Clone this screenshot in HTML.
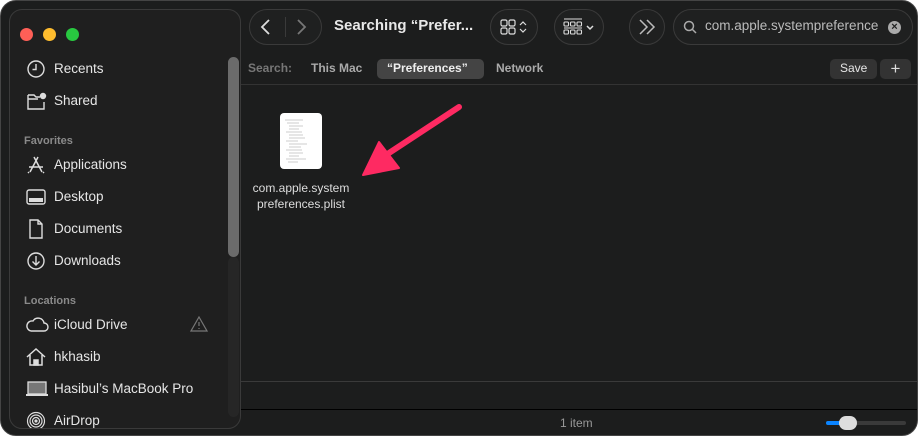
<!DOCTYPE html>
<html><head><style>
*{margin:0;padding:0;box-sizing:border-box}
body{width:920px;height:436px;background:#fff;font-family:"Liberation Sans",sans-serif;overflow:hidden;position:relative}
.win{position:absolute;left:0;top:0;width:918px;height:436px;background:#1c1d1d;border-radius:16px;border:1px solid #444;overflow:hidden}
.side{position:absolute;left:8px;top:8px;width:232px;height:420px;background:#1f1f1f;border:1px solid #3a3a3a;border-radius:13px;overflow:hidden}
.dot{position:absolute;top:18px;width:13px;height:13px;border-radius:50%}
.it{position:absolute;left:44px;color:#e6e6e6;font-size:13.5px}
.hd{position:absolute;left:14px;color:#8a8a8a;font-size:11px;font-weight:bold}
.ic{position:absolute;left:16px}
.t{position:absolute;color:#ddd}
.pill{position:absolute;border:1px solid #3a3a3a;border-radius:18px;background:#1f2020}
</style></head><body>
<div class="win">
<div class="side">
 <div class="dot" style="left:10px;background:#fe5f57"></div>
 <div class="dot" style="left:33px;background:#febc2e"></div>
 <div class="dot" style="left:56px;background:#28c840"></div>
 <div style="position:absolute;left:218px;top:47px;width:11px;height:200px;background:#6b6b6b;border-radius:6px"></div>
 <div style="position:absolute;left:218px;top:247px;width:11px;height:160px;background:#262626;border-radius:6px"></div>
 <svg class="ic" style="top:49px" width="20" height="20" viewBox="0 0 20 20" fill="none" stroke="#ddd" stroke-width="1.4"><circle cx="10" cy="10" r="8"/><path d="M10 5v5.5H6.5"/></svg>
 <div class="it" style="top:51px">Recents</div>
 <svg class="ic" style="top:82px" width="22" height="20" viewBox="0 0 22 20" fill="none" stroke="#ddd" stroke-width="1.4"><path d="M2 3h6l2 2h4M2 3v14h16v-7M2 7h10"/><circle cx="17" cy="4" r="2.5" fill="#ddd"/></svg>
 <div class="it" style="top:83px">Shared</div>
 <div class="hd" style="top:125px">Favorites</div>
 <svg class="ic" style="top:145px" width="20" height="20" viewBox="0 0 20 20" fill="none" stroke="#ddd" stroke-width="1.5"><path d="M8 2l8 15M12 2L4 17M3 12h14M3 17l-1 1M17 17l1 1"/></svg>
 <div class="it" style="top:147px">Applications</div>
 <svg class="ic" style="top:177px" width="20" height="20" viewBox="0 0 20 20" fill="none" stroke="#ddd" stroke-width="1.4"><rect x="1" y="3" width="18" height="14" rx="2"/><rect x="3" y="11" width="14" height="4" fill="#ddd" stroke="none"/></svg>
 <div class="it" style="top:179px">Desktop</div>
 <svg class="ic" style="top:209px" width="20" height="20" viewBox="0 0 20 20" fill="none" stroke="#ddd" stroke-width="1.4"><path d="M4 1h8l4 4v14H4zM12 1v4h4"/></svg>
 <div class="it" style="top:211px">Documents</div>
 <svg class="ic" style="top:241px" width="20" height="20" viewBox="0 0 20 20" fill="none" stroke="#ddd" stroke-width="1.4"><circle cx="10" cy="10" r="8"/><path d="M10 5v9M6.5 10.5L10 14l3.5-3.5"/></svg>
 <div class="it" style="top:243px">Downloads</div>
 <div class="hd" style="top:285px">Locations</div>
 <svg class="ic" style="top:305px;left:15px" width="24" height="20" viewBox="0 0 24 20" fill="none" stroke="#ddd" stroke-width="1.4"><path d="M6 16h13a4 4 0 0 0 0-8 6 6 0 0 0-11-2 5 5 0 0 0-2 10z"/></svg>
 <div class="it" style="top:307px">iCloud Drive</div>
 <svg style="position:absolute;left:180px;top:306px" width="18" height="16" viewBox="0 0 18 16" fill="none" stroke="#777" stroke-width="1.2"><path d="M9 1l8 14H1z"/><path d="M9 6v4M9 12v1"/></svg>
 <svg class="ic" style="top:337px" width="22" height="20" viewBox="0 0 22 20" fill="none" stroke="#ddd" stroke-width="1.5"><path d="M1 10L10 2l9 8M4 8v10h12V8"/><rect x="8" y="13" width="4" height="5" fill="#ddd"/></svg>
 <div class="it" style="top:339px">hkhasib</div>
 <svg class="ic" style="top:369px;left:15px" width="24" height="20" viewBox="0 0 24 20"><rect x="3" y="3" width="18" height="12" fill="#777" stroke="#ddd" stroke-width="1.3"/><rect x="1" y="15" width="22" height="2" fill="#ddd"/></svg>
 <div class="it" style="top:371px">Hasibul’s MacBook Pro</div>
 <svg class="ic" style="top:401px" width="20" height="20" viewBox="0 0 20 20" fill="none" stroke="#ddd" stroke-width="1.2"><circle cx="10" cy="10" r="8.5"/><circle cx="10" cy="10" r="6"/><circle cx="10" cy="10" r="3.5"/><circle cx="10" cy="10" r="1" fill="#ddd"/></svg>
 <div class="it" style="top:403px">AirDrop</div>
</div>

<div class="pill" style="left:248px;top:8px;width:73px;height:36px"></div>
<div style="position:absolute;left:284px;top:16px;width:1px;height:20px;background:#3a3a3a"></div>
<svg style="position:absolute;left:257px;top:17px" width="16" height="18" viewBox="0 0 16 18" fill="none" stroke="#ddd" stroke-width="1.8"><path d="M11 2L4 9l7 7"/></svg>
<svg style="position:absolute;left:292px;top:17px" width="16" height="18" viewBox="0 0 16 18" fill="none" stroke="#777" stroke-width="1.8"><path d="M5 2l7 7-7 7"/></svg>
<div class="t" style="left:333px;top:16px;font-size:15px;font-weight:bold;color:#e8e8e8">Searching “Prefer...</div>
<div class="pill" style="left:489px;top:8px;width:48px;height:36px"></div>
<svg style="position:absolute;left:499px;top:18px" width="30" height="16" viewBox="0 0 30 16" fill="none" stroke="#ddd" stroke-width="1.2"><rect x="1" y="1" width="6" height="6" rx="1.5"/><rect x="9" y="1" width="6" height="6" rx="1.5"/><rect x="1" y="9" width="6" height="6" rx="1.5"/><rect x="9" y="9" width="6" height="6" rx="1.5"/><path d="M20 6l3-3 3 3M20 10l3 3 3-3"/></svg>
<div class="pill" style="left:553px;top:8px;width:50px;height:36px"></div>
<svg style="position:absolute;left:562px;top:17px" width="36" height="18" viewBox="0 0 36 18" fill="none" stroke="#ddd" stroke-width="1.1"><path d="M1 1h18"/><rect x="1" y="4" width="4.5" height="4" rx="1"/><rect x="7.5" y="4" width="4.5" height="4" rx="1"/><rect x="14" y="4" width="4.5" height="4" rx="1"/><path d="M1 10h18"/><rect x="1" y="12" width="4.5" height="4" rx="1"/><rect x="7.5" y="12" width="4.5" height="4" rx="1"/><rect x="14" y="12" width="4.5" height="4" rx="1"/><path d="M24 8l3 3 3-3" stroke-width="1.5"/></svg>
<div class="pill" style="left:628px;top:8px;width:36px;height:36px"></div>
<svg style="position:absolute;left:636px;top:17px" width="22" height="18" viewBox="0 0 22 18" fill="none" stroke="#bbb" stroke-width="1.5"><path d="M3 2l7 7-7 7M10 2l7 7-7 7"/></svg>
<div class="pill" style="left:672px;top:8px;width:240px;height:36px"></div>
<svg style="position:absolute;left:682px;top:19px" width="14" height="14" viewBox="0 0 14 14" fill="none" stroke="#aaa" stroke-width="1.5"><circle cx="6" cy="6" r="4.5"/><path d="M9.5 9.5L13 13"/></svg>
<div class="t" style="left:704px;top:17px;font-size:13.5px;color:#bbb">com.apple.systempreference</div>
<div style="position:absolute;left:887px;top:20px;width:13px;height:13px;border-radius:50%;background:#aaa;color:#1f2020;font-size:11px;line-height:13px;text-align:center;font-weight:bold">×</div>

<div class="t" style="left:247px;top:60px;font-size:12px;font-weight:bold;color:#777">Search:</div>
<div class="t" style="left:310px;top:60px;font-size:12px;font-weight:bold;color:#aaa">This Mac</div>
<div style="position:absolute;left:376px;top:58px;width:107px;height:20px;border-radius:5px;background:#444"></div>
<div class="t" style="left:386px;top:60px;font-size:12px;font-weight:bold;color:#eee">“Preferences”</div>
<div class="t" style="left:495px;top:60px;font-size:12px;font-weight:bold;color:#aaa">Network</div>
<div style="position:absolute;left:829px;top:58px;width:47px;height:20px;border-radius:5px;background:#333"></div>
<div class="t" style="left:839px;top:60px;font-size:12px;color:#e6e6e6">Save</div>
<div style="position:absolute;left:879px;top:58px;width:31px;height:20px;border-radius:5px;background:#333;color:#ddd;text-align:center;font-size:17px;line-height:19px">+</div>
<div style="position:absolute;left:240px;top:83px;width:680px;height:1px;background:#333"></div>

<div style="position:absolute;left:279px;top:112px;width:42px;height:56px;background:#fff;border-radius:4px;padding:5px 4px">
<svg width="34" height="46" viewBox="0 0 34 46" stroke="#999" stroke-width="0.6"><path d="M1 2h18M3 5h12M5 8h14M5 11h10M2 14h16M5 17h14M5 20h16M2 23h12M5 26h18M5 29h12M2 32h16M5 35h14M5 38h10M2 41h20M4 44h10"/></svg></div>
<div class="t" style="left:238px;top:179px;width:124px;text-align:center;font-size:12px;line-height:16px;color:#ddd">com.apple.system<br>preferences.plist</div>
<svg style="position:absolute;left:355px;top:100px" width="110" height="80" viewBox="355 100 110 80"><path d="M458 106L388 152" stroke="#fe2a62" stroke-width="6" stroke-linecap="round"/><path d="M362 174L378 141L398 167Z" fill="#fe2a62" stroke="#fe2a62" stroke-width="2" stroke-linejoin="round"/></svg>

<div style="position:absolute;left:240px;top:380px;width:680px;height:1px;background:#3a3a3a"></div>
<div style="position:absolute;left:240px;top:408px;width:680px;height:1px;background:#000"></div>
<div class="t" style="left:559px;top:415px;font-size:12px;color:#999">1 item</div>
<div style="position:absolute;left:825px;top:420px;width:80px;height:4px;border-radius:2px;background:#3a3a3a"></div>
<div style="position:absolute;left:825px;top:420px;width:20px;height:4px;border-radius:2px;background:#0a84ff"></div>
<div style="position:absolute;left:838px;top:415px;width:18px;height:14px;border-radius:7px;background:#ddd"></div>
</div>
</body></html>
